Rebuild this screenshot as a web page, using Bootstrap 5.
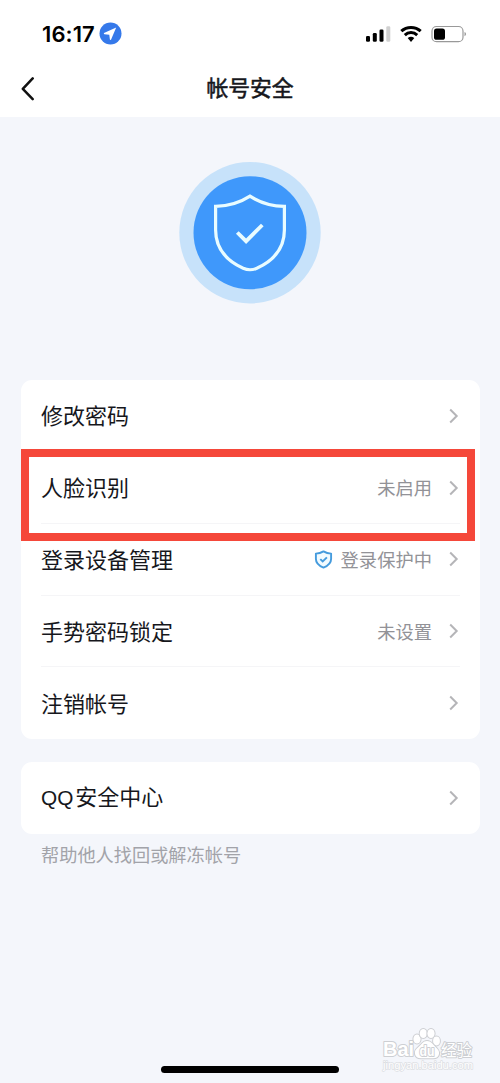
<!DOCTYPE html>
<html lang="zh-CN">
<head>
<meta charset="utf-8">
<meta name="viewport" content="width=device-width, initial-scale=1">
<title>帐号安全</title>
<link href="https://cdn.jsdelivr.net/npm/bootstrap@5.3.0/dist/css/bootstrap.min.css" rel="stylesheet">
<style>
body{background:#f4f6fb;font-family:"Noto Sans CJK SC",sans-serif;color:#16171c;height:1083px;overflow:hidden}
svg{display:block;flex-shrink:0}
.top-area{height:116.500px}
.status-bar{height:60px;padding:7px 33px 0 42px}
.clock{font:600 22px/1 Inter,sans-serif;letter-spacing:.1px;color:#000}
.title-bar{height:57px;padding:0 20px}
.title-bar h1{font-size:21.8px;line-height:32px;font-weight:400;-webkit-text-stroke:.55px #16171c;color:#16171c;padding-bottom:3px}
.side{width:16px}
.hero{height:263.500px;padding-top:45px}
.panel{margin:0 20.5px;border-radius:11px;background:#fff}
.item{height:71.8px;padding:0 20.5px;font-size:22px;line-height:32px;position:relative}
.item>.me-auto{padding-bottom:3px}
.latin{font-family:"Liberation Sans",sans-serif;font-size:20.8px;margin-right:2px}
.line-below::after{content:"";position:absolute;left:20px;right:20px;bottom:-.2px;height:1px;background:#f5f5f7}
.value{font-size:18.3px;color:#929297;margin-right:16px;padding-bottom:1px}
.hint{font-size:18.2px;line-height:26px;color:#a2a3a9;padding:7px 41px 0}
.frame{position:absolute;left:0;right:4.5px;top:-2.5px;height:92px;border:8px solid #f5483a;z-index:2}
.home{position:absolute;left:161px;top:1066px;width:178px;height:7px;border-radius:4px;background:#000}
.watermark{position:absolute;left:380px;top:1024px}
</style>
</head>
<body class="position-relative">
<header class="top-area bg-white">
  <div class="status-bar d-flex align-items-center justify-content-between">
    <div class="d-flex align-items-center gap-1">
      <span class="clock">16:17</span>
      <svg width="23" height="23" viewBox="0 0 23 23"><circle cx="11.5" cy="11.5" r="11" fill="#3579ea"/><path d="M17.2 5.6 5 10.9Q4.400 11.800 5.4 12.200l4.900.5.6 4.900q.5.9 1.100.1z" fill="#fff"/></svg>
    </div>
    <svg width="102" height="20" viewBox="0 0 102 20">
      <g fill="#000"><rect x="1" y="12" width="4" height="5.8" rx="1.3"/><rect x="7.8" y="9" width="4" height="8.8" rx="1.3"/><rect x="14.5" y="5.5" width="4" height="12.3" rx="1.3"/></g>
      <rect x="21.3" y="2.3" width="4" height="15.5" rx="1.3" fill="#d0d0d0"/>
      <g fill="none" stroke="#000" stroke-width="3"><path d="M36.3 7.2a14.3 14.3 0 0 1 19.4 0"/><path d="M39.8 11.1a9 9 0 0 1 12.4 0"/></g>
      <path d="M42.7 14.1a5 5 0 0 1 6.600 0L46 17.9z" fill="#000"/>
      <rect x="67" y="2.500" width="31" height="15.200" rx="4.500" fill="#fff" stroke="#999" stroke-width="1.200"/>
      <rect x="69" y="4.500" width="11" height="11.300" rx="2.600"/>
      <path d="M99.500 8q1.600.5 1.600 2.100t-1.600 2.200z" fill="#999"/>
    </svg>
  </div>
  <div class="title-bar d-flex align-items-center justify-content-between">
    <svg class="side" width="16" height="24" viewBox="0 0 16 24"><path d="M12.7 1.4 2.8 11.8l9.9 10.3" fill="none" stroke="#111" stroke-width="2.5" stroke-linecap="round" stroke-linejoin="round"/></svg>
    <h1 class="m-0">帐号安全</h1>
    <span class="side"></span>
  </div>
</header>
<main>
  <section class="hero d-flex justify-content-center align-items-start">
    <svg width="142" height="142" viewBox="0 0 142 142">
      <circle cx="71" cy="70.7" r="70.7" fill="#c7e2fa"/><circle cx="71" cy="70.7" r="56.5" fill="#3f98fb"/>
      <path d="M71 34.2Q56 44 36.6 44.4V68C36.6 85 46 98 64.2 106.3Q71 109.2 77.8 106.3C96 98 105.4 85 105.4 68V44.4Q86 44 71 34.2Z" fill="none" stroke="#e9fcff" stroke-width="3.2"/>
      <path d="m58.3 70.5 8.8 8.7L83.3 63" fill="none" stroke="#e9fcff" stroke-width="3.8"/>
    </svg>
  </section>
  <section class="panel">
    <div class="item d-flex align-items-center"><span class="me-auto">修改密码</span><svg width="11" height="16" viewBox="0 0 11 16"><path d="m2.2 1.5 6.5 6.5-6.5 6.5" fill="none" stroke="#b5b5b8" stroke-width="2"/></svg></div>
    <div class="item line-below d-flex align-items-center"><span class="frame"></span><span class="me-auto">人脸识别</span><span class="value">未启用</span><svg width="11" height="16" viewBox="0 0 11 16"><path d="m2.2 1.5 6.5 6.5-6.5 6.5" fill="none" stroke="#b5b5b8" stroke-width="2"/></svg></div>
    <div class="item line-below d-flex align-items-center"><span class="me-auto">登录设备管理</span>
      <svg class="me-2" width="19" height="19" viewBox="0 0 19 19"><path d="M9.5 1.4Q6 3.5 1.9 3.6V9Q1.9 14.6 9.5 17.6 17.1 14.6 17.1 9V3.6Q13 3.5 9.5 1.4Z" fill="#f2fbff" stroke="#459bdd" stroke-width="1.9" stroke-linejoin="round"/><path d="m6.3 9.1 2.4 2.4 4.2-4.2" fill="none" stroke="#459bdd" stroke-width="1.9"/></svg>
      <span class="value">登录保护中</span><svg width="11" height="16" viewBox="0 0 11 16"><path d="m2.2 1.5 6.5 6.5-6.5 6.5" fill="none" stroke="#b5b5b8" stroke-width="2"/></svg></div>
    <div class="item line-below d-flex align-items-center"><span class="me-auto">手势密码锁定</span><span class="value">未设置</span><svg width="11" height="16" viewBox="0 0 11 16"><path d="m2.2 1.5 6.5 6.5-6.5 6.5" fill="none" stroke="#b5b5b8" stroke-width="2"/></svg></div>
    <div class="item d-flex align-items-center"><span class="me-auto">注销帐号</span><svg width="11" height="16" viewBox="0 0 11 16"><path d="m2.2 1.5 6.5 6.5-6.5 6.5" fill="none" stroke="#b5b5b8" stroke-width="2"/></svg></div>
  </section>
  <section class="panel" style="margin-top:23px">
    <div class="item d-flex align-items-center"><span class="me-auto"><span class="latin">QQ</span>安全中心</span><svg width="11" height="16" viewBox="0 0 11 16"><path d="m2.2 1.5 6.5 6.5-6.5 6.5" fill="none" stroke="#b5b5b8" stroke-width="2"/></svg></div>
  </section>
  <p class="hint m-0">帮助他人找回或解冻帐号</p>
</main>
<svg class="watermark" width="100" height="50" viewBox="0 0 100 50">
  <g fill="#fff" stroke="#cdcfd3" stroke-width="2" paint-order="stroke" stroke-linejoin="round">
    <text x="3" y="32" font-family="Liberation Sans, sans-serif" font-weight="700" font-size="20" textLength="31" lengthAdjust="spacingAndGlyphs">Bai</text>
    <ellipse cx="37" cy="15" rx="3.6" ry="4.6"/><ellipse cx="43.3" cy="9.500" rx="3.6" ry="4.6"/><ellipse cx="51" cy="9.500" rx="3.6" ry="4.6"/><ellipse cx="56.5" cy="17" rx="3.400" ry="4.400"/>
    <path d="M47 17c-4 0-5.500 3.500-8.500 6s-4 4-3.500 7 3 4.500 7 4.200h10c4 .3 6.500-1.200 7-4.200s-1-4.500-3.500-7S51 17 47 17z"/>
    <text x="39.500" y="31.500" font-family="Liberation Sans, sans-serif" font-weight="700" font-size="14" textLength="15" lengthAdjust="spacingAndGlyphs">du</text>
    <text x="61" y="32" font-family="Noto Sans CJK SC, sans-serif" font-weight="400" font-size="16" textLength="31" lengthAdjust="spacingAndGlyphs">经验</text>
    <text x="3" y="45" font-family="Liberation Sans, sans-serif" font-size="10" stroke="#dcdee2" stroke-width="1.300" textLength="90" lengthAdjust="spacingAndGlyphs">jingyan.baidu.com</text>
  </g>
</svg>
<div class="home"></div>
<script src="https://cdn.jsdelivr.net/npm/bootstrap@5.3.0/dist/js/bootstrap.bundle.min.js"></script>
</body>
</html>
